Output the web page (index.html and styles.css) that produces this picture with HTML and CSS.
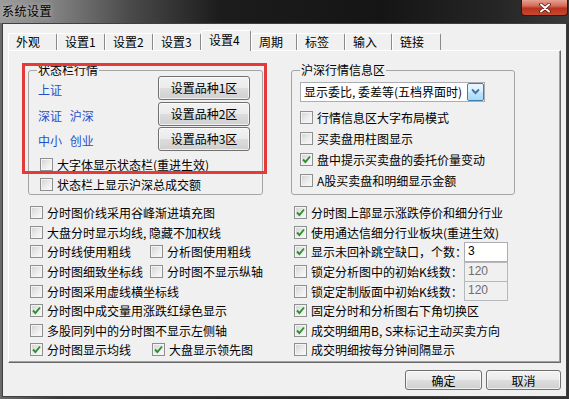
FILE: index.html
```html
<!DOCTYPE html>
<html lang="zh-CN">
<head>
<meta charset="utf-8">
<title>系统设置</title>
<link rel="stylesheet" href="styles.css">
</head>
<body>
<div class="win">
  <div class="titlebar">
    <span class="title">系统设置</span>
    <span class="close"><svg width="14" height="10" viewBox="0 0 14 10"><path d="M3 1.5 L11 8.5 M11 1.5 L3 8.5" stroke="#5a1a10" stroke-width="3.6" stroke-linecap="round"/><path d="M3 1.5 L11 8.5 M11 1.5 L3 8.5" stroke="#fff" stroke-width="2" stroke-linecap="round"/></svg></span>
  </div>
  <div class="client">
    <div class="tabs">
      <div class="tab w49">外观</div>
      <div class="tab w48">设置1</div>
      <div class="tab w48">设置2</div>
      <div class="tab w48">设置3</div>
      <div class="tab sel w50">设置4</div>
      <div class="tab w46">周期</div>
      <div class="tab w48">标签</div>
      <div class="tab w47">输入</div>
      <div class="tab w49">链接</div>
    </div>
    <div class="panel">
      <div class="groups">
        <div class="group g-left">
          <div class="legend">状态栏行情</div>
          <div class="markets">
            <span class="mk">上证</span><button class="btn">设置品种1区</button>
            <span class="mk">深证 沪深</span><button class="btn">设置品种2区</button>
            <span class="mk">中小 创业</span><button class="btn">设置品种3区</button>
          </div>
          <label class="chk first"><span class="box"></span>大字体显示状态栏(重进生效)</label>
          <label class="chk"><span class="box"></span>状态栏上显示沪深总成交额</label>
        </div>
        <div class="group g-right">
          <div class="legend">沪深行情信息区</div>
          <div class="combo">
            <span class="combo-text">显示委比, 委差等(五档界面时)</span>
            <span class="dd"><svg width="15" height="16" viewBox="0 0 15 16"><path d="M4 5.5 L7.5 9 L11 5.5" fill="none" stroke="#4a6fa5" stroke-width="2"/></svg></span>
          </div>
          <label class="chk first"><span class="box"></span>行情信息区大字布局模式</label>
          <label class="chk"><span class="box"></span>买卖盘用柱图显示</label>
          <label class="chk"><span class="box"><svg width="11" height="11" viewBox="0 0 11 11"><path d="M2 5.5 L4.4 8 L9 2.5" fill="none" stroke="#2f8f2f" stroke-width="1.9"/></svg></span>盘中提示买卖盘的委托价量变动</label>
          <label class="chk"><span class="box"></span>A股买卖盘和明细显示金额</label>
        </div>
      </div>
      <div class="options">
        <div class="col">
          <label class="row"><span class="box"></span>分时图价线采用谷峰渐进填充图</label>
          <label class="row"><span class="box"></span>大盘分时显示均线, 隐藏不加权线</label>
          <div class="row"><label class="chk c1"><span class="box"></span>分时线使用粗线</label><label class="chk"><span class="box"></span>分析图使用粗线</label></div>
          <div class="row"><label class="chk c1"><span class="box"></span>分时图细致坐标线</label><label class="chk"><span class="box"></span>分时图不显示纵轴</label></div>
          <label class="row"><span class="box"></span>分时图采用虚线横坐标线</label>
          <label class="row"><span class="box"><svg width="11" height="11" viewBox="0 0 11 11"><path d="M2 5.5 L4.4 8 L9 2.5" fill="none" stroke="#2f8f2f" stroke-width="1.9"/></svg></span>分时图中成交量用涨跌红绿色显示</label>
          <label class="row"><span class="box"></span>多股同列中的分时图不显示左侧轴</label>
          <div class="row"><label class="chk c1"><span class="box"><svg width="11" height="11" viewBox="0 0 11 11"><path d="M2 5.5 L4.4 8 L9 2.5" fill="none" stroke="#2f8f2f" stroke-width="1.9"/></svg></span>分时图显示均线</label><label class="chk c2"><span class="box"><svg width="11" height="11" viewBox="0 0 11 11"><path d="M2 5.5 L4.4 8 L9 2.5" fill="none" stroke="#2f8f2f" stroke-width="1.9"/></svg></span>大盘显示领先图</label></div>
        </div>
        <div class="col">
          <label class="row"><span class="box"><svg width="11" height="11" viewBox="0 0 11 11"><path d="M2 5.5 L4.4 8 L9 2.5" fill="none" stroke="#2f8f2f" stroke-width="1.9"/></svg></span>分时图上部显示涨跌停价和细分行业</label>
          <label class="row"><span class="box"><svg width="11" height="11" viewBox="0 0 11 11"><path d="M2 5.5 L4.4 8 L9 2.5" fill="none" stroke="#2f8f2f" stroke-width="1.9"/></svg></span>使用通达信细分行业板块(重进生效)</label>
          <div class="row"><label class="chk lbl"><span class="box"><svg width="11" height="11" viewBox="0 0 11 11"><path d="M2 5.5 L4.4 8 L9 2.5" fill="none" stroke="#2f8f2f" stroke-width="1.9"/></svg></span>显示未回补跳空缺口，个数：</label><input class="num" type="text" value="3"></div>
          <div class="row"><label class="chk lbl"><span class="box"></span>锁定分析图中的初始K线数：</label><input class="num dis" type="text" value="120" disabled></div>
          <div class="row"><label class="chk lbl"><span class="box"></span>锁定定制版面中初始K线数：</label><input class="num dis" type="text" value="120" disabled></div>
          <label class="row"><span class="box"><svg width="11" height="11" viewBox="0 0 11 11"><path d="M2 5.5 L4.4 8 L9 2.5" fill="none" stroke="#2f8f2f" stroke-width="1.9"/></svg></span>固定分时和分析图右下角切换区</label>
          <label class="row"><span class="box"><svg width="11" height="11" viewBox="0 0 11 11"><path d="M2 5.5 L4.4 8 L9 2.5" fill="none" stroke="#2f8f2f" stroke-width="1.9"/></svg></span>成交明细用B, S来标记主动买卖方向</label>
          <label class="row"><span class="box"></span>成交明细按每分钟间隔显示</label>
        </div>
      </div>
      <div class="mark"></div>
    </div>
    <div class="actions">
      <button class="btn ok">确定</button>
      <button class="btn cancel">取消</button>
    </div>
  </div>
</div>
</body>
</html>
```

FILE: styles.css
```css
* { box-sizing: border-box; }
html, body { margin: 0; padding: 0; }
body {
  width: 569px;
  height: 399px;
  overflow: hidden;
  background: #2c2c2c;
  font-family: "Noto Sans CJK SC", "Noto Sans", sans-serif;
  font-size: 12px;
  color: #000;
}
.win {
  display: flex;
  flex-direction: column;
  height: 399px;
  background: linear-gradient(90deg, #6a6a6a 0, #3a3a3a 60px, #262626 300px, #333 569px);
}
.titlebar {
  height: 23px;
  flex: none;
  display: flex;
  justify-content: space-between;
  align-items: flex-start;
  background: linear-gradient(90deg, #9c9c9c 0, #858585 50px, #4a4a4a 130px, #1c1c1c 220px, #151515 380px, #262626 500px, #3a3a3a 569px);
}
.title {
  padding: 3px 0 0 2px;
  line-height: 15px;
  font-size: 12px;
  letter-spacing: 0.5px;
  color: #000;
  text-shadow: 0 0 5px rgba(255,255,255,0.55);
}
.close {
  width: 47px;
  height: 16px;
  margin-right: 1px;
  border: 1px solid #3b1410;
  border-top: none;
  border-radius: 0 0 4px 4px;
  background: linear-gradient(#e6a191 0%, #d46a55 40%, #b8331f 55%, #c9492e 100%);
  display: flex;
  align-items: center;
  justify-content: center;
}
.client {
  flex: 1;
  margin: 0 2px 2px;
  border: 1px solid #3f3f3f;
  background: #f0f0f0;
  padding: 6px 5px 6px;
  display: flex;
  flex-direction: column;
}
.tabs {
  display: flex;
  align-items: flex-end;
  height: 20px;
  flex: none;
}
.tab {
  height: 17px;
  border: 1px solid;
  border-color: #fff #8a8a8a transparent #fff;
  border-bottom: none;
  border-radius: 2px 2px 0 0;
  padding-left: 7px;
  line-height: 16px;
  white-space: nowrap;
  background: #f0f0f0;
}
.tab.sel {
  height: 21px;
  line-height: 18px;
  margin-bottom: -1px;
  position: relative;
  z-index: 1;
}
.w46 { width: 46px; }
.w47 { width: 47px; }
.w48 { width: 48px; }
.w49 { width: 49px; }
.w50 { width: 50px; }
.panel {
  height: 313px;
  flex: none;
  position: relative;
  border: 1px solid;
  border-color: #fff #696969 #696969 #fff;
  box-shadow: inset -1px -1px 0 #a0a0a0;
  background: #f0f0f0;
  padding-top: 19px;
}
.groups {
  display: flex;
  align-items: flex-start;
  padding-left: 19px;
}
.group {
  border: 1px solid #a5a5a5;
  border-radius: 3px;
}
.g-left {
  width: 235px;
  padding: 0 0 0 9px;
}
.g-right {
  width: 224px;
  margin-left: 28px;
  padding: 0 0 3px 8px;
}
.legend {
  display: table;
  margin: -8px 0 0 0;
  padding: 0 1px;
  line-height: 14px;
  background: #f0f0f0;
  white-space: nowrap;
}
.g-left .legend { margin-left: -1px; }
.markets {
  display: grid;
  grid-template-columns: 120px 92px;
  grid-auto-rows: 24px;
  row-gap: 1.5px;
  margin-top: -1px;
}
.mk {
  color: #1f4fcc;
  line-height: 24px;
  padding-top: 2px;
  white-space: nowrap;
  word-spacing: 5px;
}
.btn {
  font-family: inherit;
  font-size: 12px;
  color: #000;
  height: 24px;
  padding: 0;
  border: 1px solid #707070;
  border-radius: 3px;
  background: linear-gradient(#f2f2f2 0%, #ebebeb 48%, #dddddd 52%, #cfcfcf 100%);
  box-shadow: inset 0 0 0 1px rgba(255,255,255,0.7);
  line-height: 20px;
}
.chk {
  display: flex;
  align-items: center;
  height: 20px;
  white-space: nowrap;
}
.g-left .chk { padding-left: 2px; }
.g-left .chk.first { margin-top: 3px; }
.g-right .chk { height: 21px; }
.g-right .chk.first { margin-top: 5px; }
.box {
  width: 13px;
  height: 13px;
  flex: none;
  margin-right: 4px;
  border: 1px solid #8e8f8f;
  background: linear-gradient(135deg, #cfd1d4 0%, #ececec 55%, #fbfbfb 100%);
  box-shadow: inset 0 0 0 1px #f4f4f4;
  display: flex;
  align-items: center;
  justify-content: center;
}
.box svg { display: block; }
.combo {
  display: flex;
  align-items: center;
  width: 185px;
  height: 20px;
  margin-top: 5px;
  border: 1px solid #abadb3;
  background: #fff;
}
.combo-text {
  flex: 1;
  padding-left: 3px;
  line-height: 18px;
  white-space: nowrap;
  overflow: hidden;
}
.dd {
  width: 17px;
  height: 18px;
  flex: none;
  border: 1px solid #3c7fb1;
  border-radius: 2px;
  background: linear-gradient(#eaf6fd 0%, #d9f0fc 48%, #bee6fd 52%, #a7d9f5 100%);
  display: flex;
  align-items: center;
  justify-content: center;
}
.options {
  display: grid;
  grid-template-columns: 264px 1fr;
  margin-top: 8px;
  padding-left: 21px;
}
.col {
  display: flex;
  flex-direction: column;
}
.row {
  display: flex;
  align-items: center;
  height: 19.6px;
  white-space: nowrap;
}
.row .chk { height: 19.6px; }
.c1 { width: 120px; }
.c2 { margin-left: 2px; }
.lbl { width: 170px; }
.num {
  width: 44px;
  height: 20px;
  margin: 0;
  padding: 0 0 2px 3px;
  border: 1px solid #abadb3;
  background: #fff;
  font-family: "Liberation Sans", sans-serif;
  font-size: 12px;
  color: #000;
  outline: none;
}
.num.dis {
  background: #f0f0f0;
  color: #6d6d6d;
  border-color: #b5b9bd;
}
.mark {
  position: absolute;
  left: 13px;
  top: 12px;
  width: 245px;
  height: 111px;
  border: 3px solid #e53a3a;
  pointer-events: none;
}
.actions {
  display: flex;
  justify-content: flex-end;
  gap: 4px;
  margin-top: 7px;
}
.actions .btn { height: 20px; line-height: 17px; }
.ok { width: 77px; }
.cancel { width: 75px; }
```
